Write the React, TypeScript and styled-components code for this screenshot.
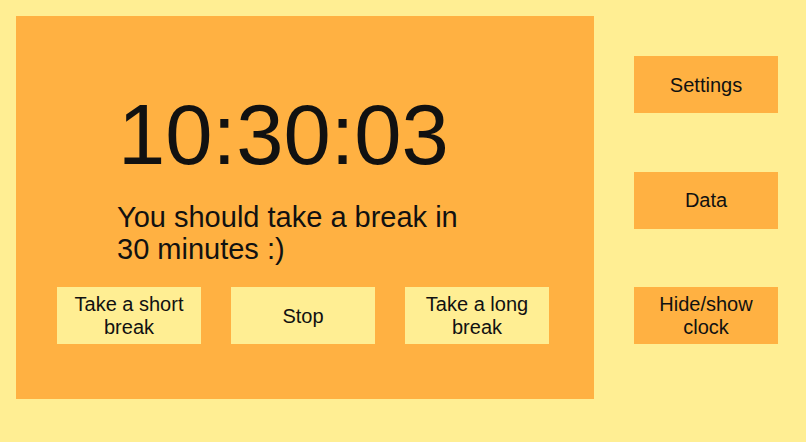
import React, { FC } from "react";
import styled, { createGlobalStyle } from "styled-components";

const GlobalStyle = createGlobalStyle`
  html, body {
    margin: 0;
    padding: 0;
    background: #FFEE93;
  }
  body {
    font-family: "Liberation Sans", Arial, sans-serif;
    color: #111;
  }
`;

const App: FC = () => {
  return (
    <>
      <GlobalStyle />
      <Page>
        <TimerPanel>
          <Clock>10:30:03</Clock>
          <Message>You should take a break in 30 minutes :)</Message>
          <Actions>
            <ActionButton>Take a short break</ActionButton>
            <ActionButton>Stop</ActionButton>
            <ActionButton>Take a long break</ActionButton>
          </Actions>
        </TimerPanel>
        <SideMenu>
          <MenuButton>Settings</MenuButton>
          <MenuButton>Data</MenuButton>
          <MenuButton>Hide/show clock</MenuButton>
        </SideMenu>
      </Page>
    </>
  );
};

const Page = styled.main`
  display: flex;
  align-items: flex-start;
  padding: 16px;
  gap: 40px;
`;

const TimerPanel = styled.section`
  width: 578px;
  height: 383px;
  box-sizing: border-box;
  background: #FFB142;
  padding: 69px 0 0 101px;
  display: flex;
  flex-direction: column;
  align-items: flex-start;
`;

const Clock = styled.h1`
  margin: 0 0 0 1px;
  font-size: 85px;
  line-height: 100px;
  font-weight: 400;
`;

const Message = styled.p`
  margin: 16px 0 0;
  max-width: 370px;
  font-size: 29px;
  line-height: 32px;
`;

const Actions = styled.div`
  display: flex;
  gap: 30px;
  margin: 22px 0 0 -60px;
`;

const BaseButton = styled.button`
  width: 144px;
  height: 57px;
  border: none;
  padding: 1px 8px 0;
  font-family: "Liberation Sans", Arial, sans-serif;
  font-size: 20px;
  line-height: 23px;
  color: #111;
  text-align: center;
  cursor: pointer;
`;

const ActionButton = styled(BaseButton)`
  background: #FFEE93;
`;

const MenuButton = styled(BaseButton)`
  background: #FFB142;
`;

const SideMenu = styled.nav`
  display: flex;
  flex-direction: column;
  gap: 58.5px;
  padding-top: 40px;
`;

export default App;
